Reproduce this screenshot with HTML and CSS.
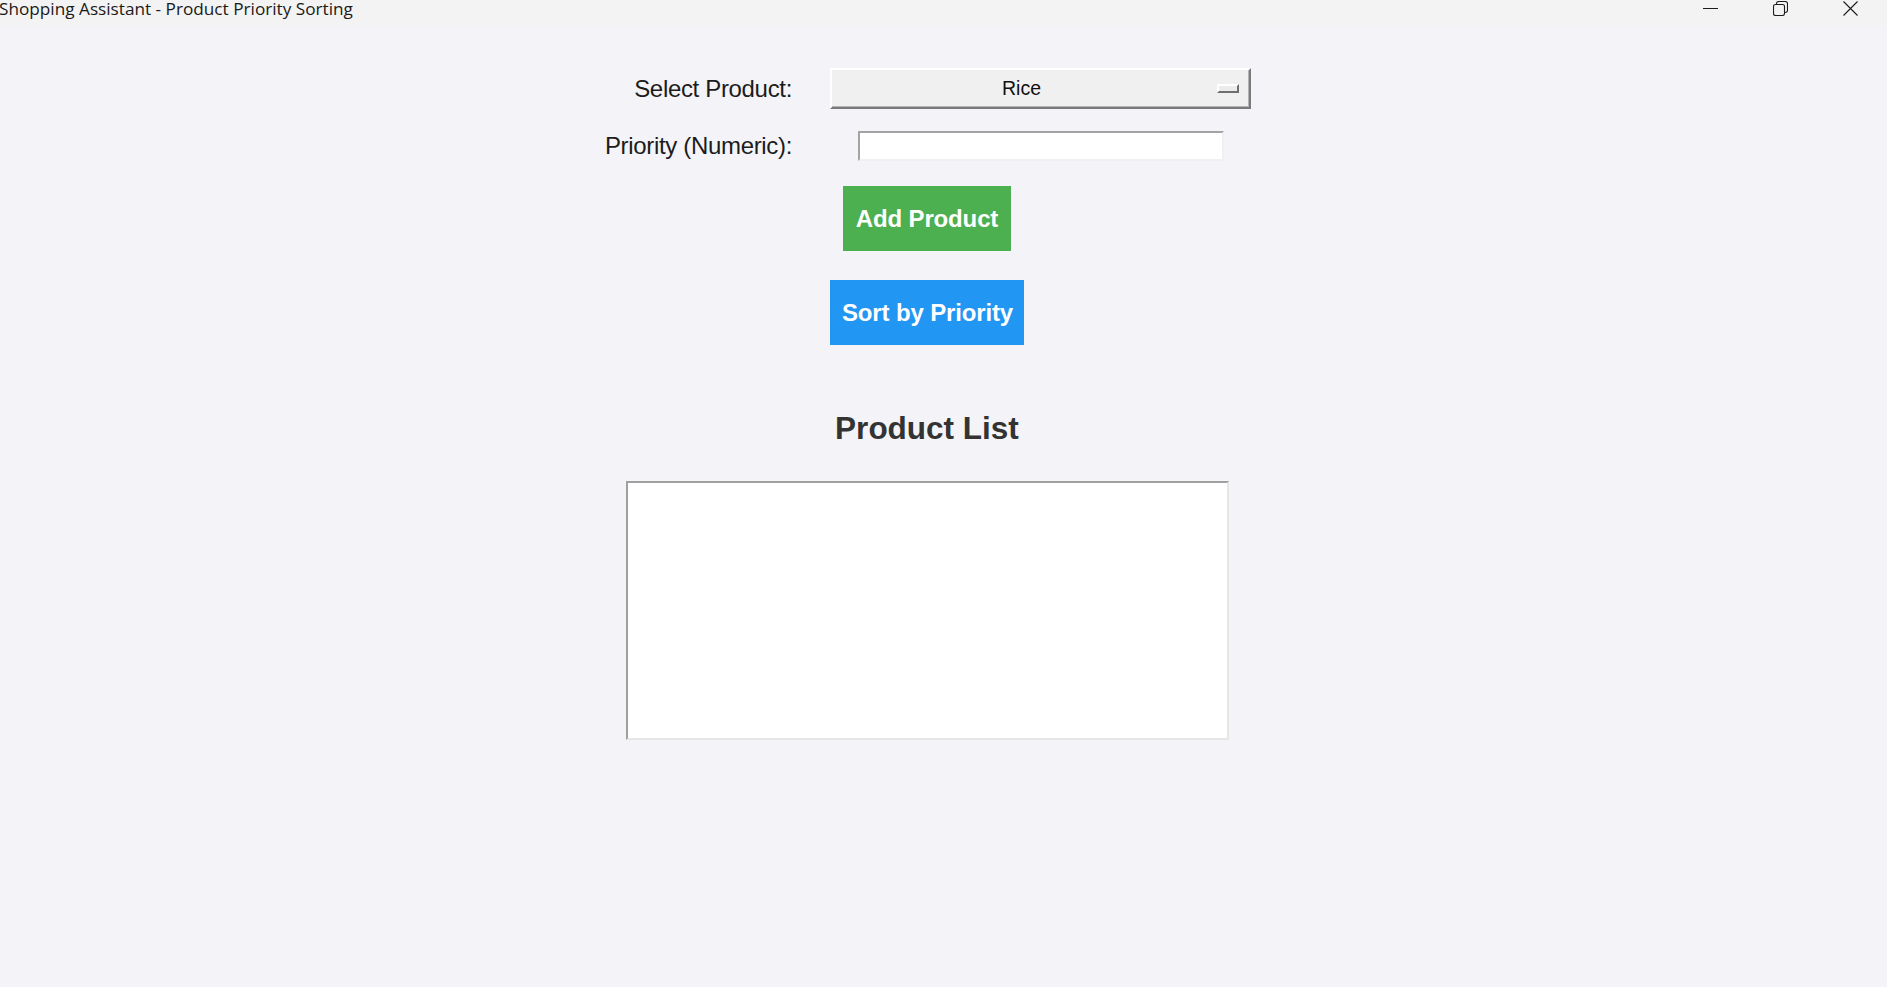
FILE: index.html
```html
<!DOCTYPE html>
<html lang="en">
<head>
<meta charset="utf-8">
<title>Shopping Assistant - Product Priority Sorting</title>
<link rel="stylesheet" href="styles.css">
</head>
<body>
<div class="titlebar">
  <span class="title">Shopping Assistant - Product Priority Sorting</span>
  <div class="controls">
    <div class="ctl">
      <svg width="15" height="15" viewBox="0 0 15 15"><path d="M0 7.5 H15" stroke="#1b1b1b" stroke-width="1" fill="none"/></svg>
    </div>
    <div class="ctl">
      <svg width="15" height="15" viewBox="0 0 15 15" fill="none" stroke="#1b1b1b" stroke-width="1.1">
        <rect x="0.5" y="3.5" width="11" height="11" rx="2"/>
        <path d="M3.5 3.5 V2.8 Q3.5 0.5 5.8 0.5 H12.2 Q14.5 0.5 14.5 2.8 V9.2 Q14.5 11.5 12.2 11.5 H11.5"/>
      </svg>
    </div>
    <div class="ctl">
      <svg width="15" height="15" viewBox="0 0 15 15" fill="none" stroke="#1b1b1b" stroke-width="1.1"><path d="M0.5 0.5 L14.5 14.5 M14.5 0.5 L0.5 14.5"/></svg>
    </div>
  </div>
</div>
<main class="app">
  <div class="form">
    <label class="lbl">Select Product:</label>
    <div class="combo">
      <span class="combo-text">Rice</span>
      <span class="combo-ind"></span>
    </div>
    <label class="lbl">Priority (Numeric):</label>
    <div class="entry"></div>
  </div>
  <button class="btn btn-add">Add Product</button>
  <button class="btn btn-sort">Sort by Priority</button>
  <h2 class="heading">Product List</h2>
  <div class="listbox"></div>
</main>
</body>
</html>
```
FILE: styles.css
```css
html, body {
  margin: 0;
  padding: 0;
}
body {
  background: #f4f4f8;
  width: 1887px;
  height: 987px;
  overflow: hidden;
  font-family: "Liberation Sans", Arial, sans-serif;
}
.titlebar {
  height: 26px;
  background: #f3f3f3;
  display: flex;
  justify-content: space-between;
  align-items: flex-start;
}
.title {
  font-family: "Open Sans", "Noto Sans", sans-serif;
  font-size: 17.2px;
  line-height: 20px;
  color: #1a1a1a;
  letter-spacing: 0;
  margin-top: -1px;
  margin-left: -1px;
  white-space: nowrap;
}
.controls {
  display: flex;
  margin-right: 2px;
}
.ctl {
  width: 70px;
  height: 18px;
  display: flex;
  justify-content: center;
  align-items: flex-start;
  padding-top: 1px;
}
.ctl svg {
  display: block;
}
.app {
  display: flex;
  flex-direction: column;
  align-items: center;
  padding-right: 33px;
}
.form {
  margin-top: 42px;
  display: grid;
  grid-template-columns: 197px 421px;
  column-gap: 38px;
  row-gap: 22px;
  padding-right: 8px;
}
.lbl {
  justify-self: end;
  align-self: center;
  font-size: 24px;
  letter-spacing: -0.33px;
  color: #1c1c1c;
  white-space: nowrap;
}
.combo {
  height: 41px;
  box-sizing: border-box;
  background: #f0f0f0;
  border-style: solid;
  border-width: 2px;
  border-color: #ffffff #7a7a7a #7a7a7a #ffffff;
  box-shadow: inset -1px -1px 0 #b4b4b4;
  display: flex;
  align-items: center;
}
.combo-text {
  flex: 1;
  text-align: center;
  font-size: 19.5px;
  color: #111;
}
.combo-ind {
  width: 22px;
  height: 9px;
  box-sizing: border-box;
  background: #ececec;
  border-style: solid;
  border-width: 2px;
  border-color: #ffffff #6f6f6f #6f6f6f #ffffff;
  margin-left: 6px;
  margin-right: 10px;
}
.entry {
  width: 366px;
  height: 30px;
  box-sizing: border-box;
  background: #ffffff;
  border-style: solid;
  border-width: 2px;
  border-color: #a3a3a3 #f0f0f0 #f0f0f0 #a3a3a3;
  justify-self: center;
}
.btn {
  border: none;
  height: 65px;
  padding: 0 12px;
  color: #ffffff;
  font-family: "Liberation Sans", Arial, sans-serif;
  font-weight: bold;
  font-size: 24px;
  letter-spacing: -0.15px;
  white-space: nowrap;
}
.btn-add {
  margin-top: 25px;
  width: 168px;
  background: #4caf50;
}
.btn-sort {
  margin-top: 29px;
  width: 194px;
  background: #2196f3;
}
.heading {
  margin: 65px 0 0 0;
  font-size: 31.5px;
  line-height: 36px;
  font-weight: bold;
  color: #333333;
}
.listbox {
  margin-top: 35px;
  width: 603px;
  height: 259px;
  box-sizing: border-box;
  background: #ffffff;
  border-style: solid;
  border-width: 2px;
  border-color: #a0a0a0 #e6e6e6 #e6e6e6 #a0a0a0;
}
```
